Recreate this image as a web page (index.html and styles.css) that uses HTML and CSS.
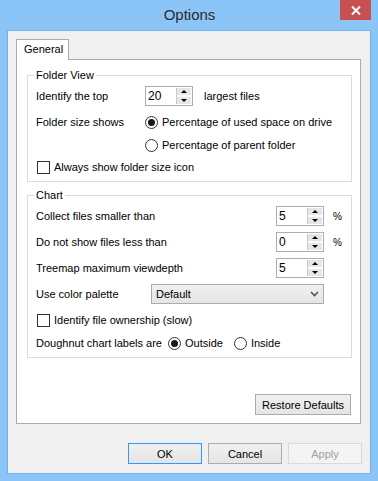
FILE: index.html
```html
<!DOCTYPE html>
<html lang="en">
<head>
    <meta charset="UTF-8">
    <title>Options</title>
    <link rel="stylesheet" href="styles.css">
</head>
<body>
    <div class="window">
        <div class="titlebar">
            <span></span>
            <span class="title">Options</span>
            <button class="close" aria-label="Close">
                <svg width="10" height="9" viewBox="0 0 10 9"><path d="M1 0.5 L9 8.5 M9 0.5 L1 8.5" stroke="#fff" stroke-width="2"/></svg>
            </button>
        </div>

        <div class="client">
            <div class="tabs">
                <div class="tab">General</div>
            </div>

            <div class="panel">
                <fieldset class="group folder">
                    <legend>Folder View</legend>
                    <div class="row r1">
                        <span class="label w-folder">Identify the top</span>
                        <div class="spin"><span class="val">20</span><div class="arrows"><i class="up"></i><i class="down"></i></div></div>
                        <span class="after">largest files</span>
                    </div>
                    <div class="row r2">
                        <span class="label w-folder">Folder size shows</span>
                        <span class="radio checked"></span>
                        <span>Percentage of used space on drive</span>
                    </div>
                    <div class="row r3">
                        <span class="label w-folder"></span>
                        <span class="radio"></span>
                        <span>Percentage of parent folder</span>
                    </div>
                    <div class="row r4">
                        <span class="check"></span>
                        <span>Always show folder size icon</span>
                    </div>
                </fieldset>

                <fieldset class="group chart">
                    <legend>Chart</legend>
                    <div class="row c1">
                        <span class="label w-chart">Collect files smaller than</span>
                        <div class="spin"><span class="val">5</span><div class="arrows"><i class="up"></i><i class="down"></i></div></div>
                        <span class="pct">%</span>
                    </div>
                    <div class="row c2">
                        <span class="label w-chart">Do not show files less than</span>
                        <div class="spin"><span class="val">0</span><div class="arrows"><i class="up"></i><i class="down"></i></div></div>
                        <span class="pct">%</span>
                    </div>
                    <div class="row c3">
                        <span class="label w-chart">Treemap maximum viewdepth</span>
                        <div class="spin"><span class="val">5</span><div class="arrows"><i class="up"></i><i class="down"></i></div></div>
                    </div>
                    <div class="row c4">
                        <span class="label w-palette">Use color palette</span>
                        <div class="combo">
                            <span>Default</span>
                            <svg width="9" height="6" viewBox="0 0 9 6"><path d="M1 1 L4.5 4.5 L8 1" fill="none" stroke="#555" stroke-width="1.6"/></svg>
                        </div>
                    </div>
                    <div class="row c5">
                        <span class="check"></span>
                        <span>Identify file ownership (slow)</span>
                    </div>
                    <div class="row c6">
                        <span class="label">Doughnut chart labels are</span>
                        <span class="radio checked"></span>
                        <span class="opt">Outside</span>
                        <span class="radio"></span>
                        <span>Inside</span>
                    </div>
                </fieldset>

                <div class="panel-foot">
                    <button class="btn restore">Restore Defaults</button>
                </div>
            </div>

            <div class="actions">
                <button class="btn default">OK</button>
                <button class="btn">Cancel</button>
                <button class="btn" disabled>Apply</button>
            </div>
        </div>
    </div>
</body>
</html>
```

FILE: styles.css
```css
body {
    margin: 0;
    font-family: "Liberation Sans", Arial, sans-serif;
    font-size: 11px;
    color: #000;
}
.window {
    width: 378px;
    height: 481px;
    background-color: #8bc5f7;
    display: flex;
    flex-direction: column;
}
.titlebar {
    height: 30px;
    display: grid;
    grid-template-columns: 1fr auto 1fr;
}
.title {
    font-size: 15px;
    color: #2b2b2b;
    line-height: 30px;
    padding-left: 1px;
}
.close {
    justify-self: end;
    align-self: start;
    width: 31px;
    height: 20px;
    margin-right: 7px;
    border: none;
    padding: 0;
    background-color: #c75050;
    display: flex;
    align-items: center;
    justify-content: center;
}
.client {
    margin: 0 7px 7px 7px;
    height: 444px;
    box-sizing: border-box;
    border: 1px solid #74b0e6;
    background-color: #f0f0f0;
    padding: 8px 8px 0 8px;
    display: flex;
    flex-direction: column;
}
.tabs {
    display: flex;
    height: 20px;
    position: relative;
    z-index: 1;
}
.tab {
    width: 53px;
    box-sizing: border-box;
    height: 21px;
    border: 1px solid #acacac;
    border-bottom: none;
    background-color: #fff;
    padding: 3px 0 0 7px;
}
.panel {
    height: 365px;
    box-sizing: border-box;
    margin-right: 1px;
    border: 1px solid #acacac;
    background-color: #fff;
    padding: 7px 8px 8px 10px;
    display: flex;
    flex-direction: column;
}
.group {
    margin: 0;
    padding: 0 0 4px 8px;
    border: 1px solid #dcdcdc;
    min-width: 0;
}
.group legend {
    padding: 0 2px;
    margin-left: -2px;
    line-height: 16px;
}
.chart {
    margin-top: 5px;
}
.row {
    display: flex;
    align-items: center;
    height: 20px;
}
.r1 { margin-top: 3px; }
.r2 { margin-top: 6px; }
.r3 { margin-top: 3px; }
.r4 { margin-top: 2px; }
.c1 { margin-top: 3px; }
.c2, .c3, .c4, .c5 { margin-top: 6px; }
.c6 { margin-top: 3px; }
.w-folder { width: 109px; flex-shrink: 0; }
.w-chart { width: 240px; flex-shrink: 0; }
.w-palette { width: 115px; flex-shrink: 0; }
.after { margin-left: 11px; }
.pct { margin-left: 9px; font-size: 10px; }
.spin {
    width: 48px;
    height: 20px;
    box-sizing: border-box;
    border: 1px solid #abadb3;
    display: flex;
    align-items: center;
    justify-content: space-between;
    padding: 0 1px 0 2px;
    font-size: 12px;
}
.arrows {
    width: 14px;
    height: 16px;
    display: flex;
    flex-direction: column;
    justify-content: space-between;
    border-left: 1px solid #c8c8c8;
}
.arrows i {
    display: block;
    height: 7px;
    background-color: #e6e6e6;
    position: relative;
}
.arrows i::after {
    content: "";
    position: absolute;
    left: 4px;
    top: 2px;
    border-left: 3px solid transparent;
    border-right: 3px solid transparent;
}
.arrows .up::after { border-bottom: 3px solid #000; }
.arrows .down::after { border-top: 3px solid #000; }
.radio {
    width: 13px;
    height: 13px;
    box-sizing: border-box;
    border: 1px solid #333;
    border-radius: 50%;
    margin-right: 4px;
    display: flex;
    align-items: center;
    justify-content: center;
    flex-shrink: 0;
}
.radio.checked::after {
    content: "";
    width: 7px;
    height: 7px;
    border-radius: 50%;
    background-color: #1a1a1a;
}
.check {
    width: 13px;
    height: 13px;
    box-sizing: border-box;
    border: 1px solid #333;
    margin: 0 4px 0 1px;
    flex-shrink: 0;
}
.c6 .label { margin-right: 6px; }
.c6 .opt { margin-right: 11px; }
.combo {
    width: 173px;
    height: 20px;
    box-sizing: border-box;
    border: 1px solid #acacac;
    background: linear-gradient(#f0f0f0, #e5e5e5);
    display: flex;
    align-items: center;
    justify-content: space-between;
    padding: 0 4px 0 4px;
}
.panel-foot {
    margin-top: auto;
    display: flex;
    justify-content: flex-end;
    padding-right: 1px;
}
.btn {
    font-family: "Liberation Sans", Arial, sans-serif;
    font-size: 11px;
    color: #000;
    height: 21px;
    width: 74px;
    padding: 0;
    border: 1px solid #acacac;
    background: linear-gradient(#f0f0f0, #e5e5e5);
}
.btn.restore {
    width: 96px;
}
.btn.default {
    border-color: #3399ff;
}
.btn:disabled {
    border-color: #d9d9d9;
    background: #f4f4f4;
    color: #a0a0a0;
}
.actions {
    margin-top: 19px;
    display: flex;
    justify-content: flex-end;
    gap: 6px;
}
```
